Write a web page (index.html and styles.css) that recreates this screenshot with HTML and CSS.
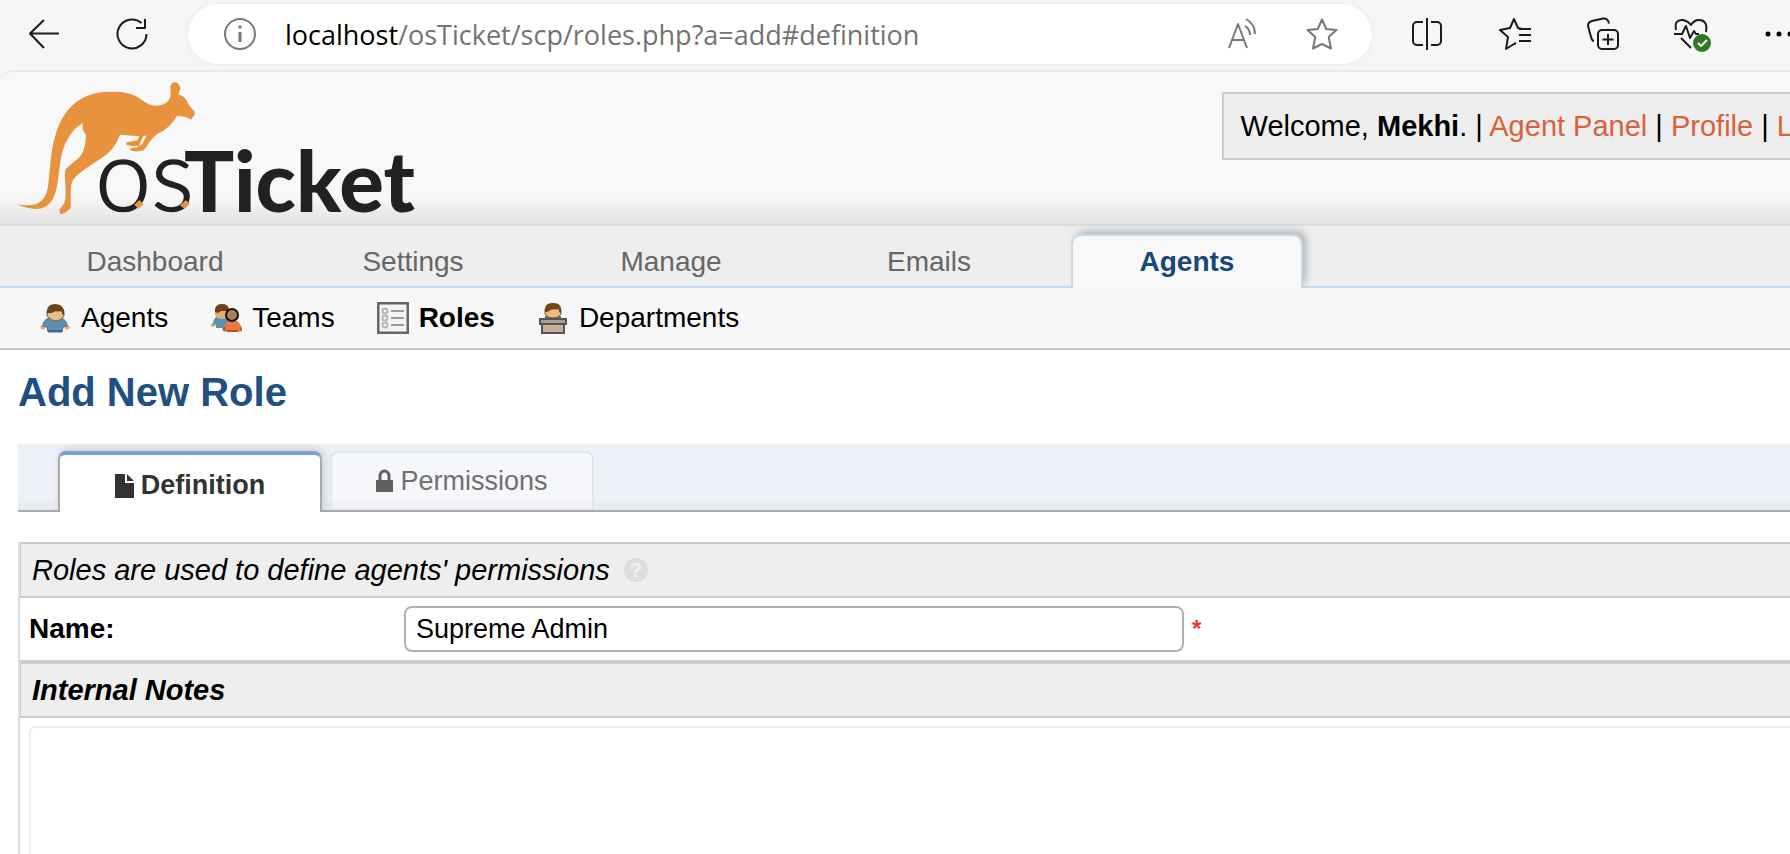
FILE: index.html
```html
<!DOCTYPE html>
<html lang="en">
<head>
<meta charset="utf-8">
<title>osTicket :: Add New Role</title>
<link rel="stylesheet" href="styles.css">
</head>
<body>
<div class="browser-bar">
  <button class="tool" type="button" aria-label="Back">
    <svg width="34" height="34" viewBox="0 0 34 34" class="ico"><path d="M32 16.500H4M17 3 3 16.500 17 31"/></svg>
  </button>
  <button class="tool" type="button" aria-label="Reload">
    <svg width="34" height="34" viewBox="0 0 34 34" class="ico"><path d="M31.500 17a14.500 14.500 0 1 1-5-11"/><path d="M30 2v9h-9"/></svg>
  </button>
  <div class="address">
    <svg width="34" height="34" viewBox="0 0 34 34" class="ico grey"><circle cx="17" cy="17" r="15"/><path d="M17 15v10" stroke-width="3"/><path d="M17 8.500v3" stroke-width="3"/></svg>
    <p class="url"><span class="host">localhost</span>/osTicket/scp/roles.php?a=add#definition</p>
    <button class="address-tool" type="button" aria-label="Read aloud">
      <svg width="34" height="34" viewBox="0 0 34 34" class="ico grey"><path d="M3 31 12 7l9 24M6 23h12M19 9q5 3 5 9M20 2q9 5 9 15"/></svg>
    </button>
    <button class="address-tool" type="button" aria-label="Add to favorites">
      <svg width="34" height="34" viewBox="0 0 34 34" class="ico grey"><path d="M17 2.500l4.200 9.500 10.300 1-7.800 7 2.300 11.500L17 27l-9 4.500L10.300 20 2.500 13l10.300-1z"/></svg>
    </button>
  </div>
  <div class="toolset">
    <button class="tool" type="button" aria-label="Split screen">
      <svg width="34" height="34" viewBox="0 0 34 34" class="ico"><path d="M17 1v32M13 5H7a4 4 0 0 0-4 4v15a4 4 0 0 0 4 4h6M21 5h6a4 4 0 0 1 4 4v15a4 4 0 0 1-4 4h-6"/></svg>
    </button>
    <button class="tool" type="button" aria-label="Favorites">
      <svg width="34" height="34" viewBox="0 0 34 34" class="ico"><path d="M24 12l-4-1L16 2l-4 9-10 2 8 7-2 12 8-5 2-1M21 12h12M21 18h12M21 24h12"/></svg>
    </button>
    <button class="tool" type="button" aria-label="Collections">
      <svg width="34" height="34" viewBox="0 0 34 34" class="ico"><rect x="12" y="13" width="20" height="19" rx="4"/><path d="M22 17v11M16.500 22.500h11M8 24q-2 0-3-4L2 9q0-4 4-5l11-2.500q5-.5 6 5"/></svg>
    </button>
    <button class="tool" type="button" aria-label="Browser essentials">
      <svg width="40" height="36" viewBox="0 0 40 36" class="ico"><path d="M5 14Q3 3 12 4q5 1 8 5 3-5 8-5 9 0 7 12"/><path d="M3 18h8l4-8 4 12 4-7 2 3h3M10 22l10 10"/><circle cx="31" cy="27" r="9" class="ok"/><path d="M27 27l3 3 6-6" class="tick"/></svg>
    </button>
    <button class="tool" type="button" aria-label="Settings and more">
      <svg width="34" height="34" viewBox="0 0 34 34"><circle cx="6" cy="17" r="2.500"/><circle cx="17" cy="17" r="2.500"/><circle cx="28" cy="17" r="2.500"/></svg>
    </button>
  </div>
</div>

<div class="page">
  <header class="header">
    <a href="#" class="logo" aria-label="osTicket">
      <svg width="400" height="138" viewBox="45 30 1200 414">
        <path class="roo" d="M50 403Q85 409 110 402Q137 390 143 355C151 305 150 250 165 200C185 130 225 75 310 66C355 63 395 65 425 89Q448 108 472 107C492 106 507 98 512 76L511 50Q515 36 525 37Q541 40 541 57L535 73Q558 80 566 104L584 126Q585 137 579 140L573 149L558 141L531 137C518 160 500 178 478 188Q460 196 438 232L431 241Q405 248 390 240Q389 233 400 233L414 232L413 227Q395 231 379 224Q376 215 390 215L412 211L418 199L360 194Q348 225 329 245C300 272 240 300 219 330C208 350 214 375 212 415Q200 428 185 433Q176 431 179 417Q192 407 196 388C200 350 192 330 196 300Q203 290 235 265C252 250 257 222 258 194Q243 178 249 158C210 180 187 230 182 270C175 310 174 365 155 392C135 420 105 425 50 403Z"/>
        <path class="gap" d="M430 199 440 196 427 222 416 229 425 209Z"/>
        <text class="os" x="286" y="424">os</text>
        <text class="ticket" x="552" y="427">Ticket</text>
        <path class="roo" d="M403 404 418 390 431 402 415 417ZM540 406 558 390 569 401 554 417Z"/>
      </svg>
    </a>
    <div class="welcome">Welcome, <strong>Mekhi</strong>. | <a href="#">Agent Panel</a> | <a href="#">Profile</a> | <a href="#">Log Out</a></div>
  </header>

  <nav class="main-nav">
    <a href="#">Dashboard</a>
    <a href="#">Settings</a>
    <a href="#">Manage</a>
    <a href="#">Emails</a>
    <a href="#" class="active">Agents</a>
  </nav>

  <nav class="sub-nav">
    <a href="#">
      <svg width="32" height="32" viewBox="0 0 32 32"><circle cx="4" cy="25" r="2.500" fill="#e0ae7c"/><circle cx="28" cy="25" r="2.500" fill="#e0ae7c"/><path d="M10 16h12q6 2 6 8l-4 1-1 5H9l-1-5-4-1q0-6 6-8z" fill="#5a90b2" stroke="#44739a"/><path d="M9 29h14" stroke="#3f5f95" stroke-width="2"/><path d="M8 9h17v5q-3 5-8 5t-9-5z" fill="#e9bd88" stroke="#8a5a2c"/><path d="M8 12V8q1-6 8-6t9 6v5l-2-1V9h-7l-3 2H9z" fill="#6f421d"/></svg>
      Agents</a>
    <a href="#">
      <svg width="32" height="32" viewBox="0 0 32 32"><circle cx="3" cy="23" r="2" fill="#d9a071"/><path d="M8 14h10v12H6v-3l-3-1q0-6 5-8z" fill="#5a90b2"/><path d="M5 8h14v5q-2 4-7 4t-7-4z" fill="#e0ad72"/><path d="M5 10V7q1-5 7-5t7 5v2h-8l-3 2z" fill="#6f421d"/><circle cx="15" cy="27" r="2.500" fill="#a5683c"/><circle cx="30" cy="27" r="2.500" fill="#a5683c"/><path d="M18 19h9q4 3 4 7l-3 4H17l-2-5q0-4 3-6z" fill="#e8783f"/><path d="M17 29h11" stroke="#b8501f" stroke-width="2"/><circle cx="22" cy="13" r="6" fill="#a98157" stroke="#17130f" stroke-width="2"/></svg>
      Teams</a>
    <a href="#" class="active">
      <svg width="32" height="32" viewBox="0 0 32 32"><rect x="1" y="1" width="30" height="30" rx="1" fill="#f4f4f4" stroke="#666" stroke-width="3"/><g fill="none" stroke="#b4b4b4" stroke-width="2"><circle cx="8" cy="9" r="2.500"/><circle cx="8" cy="16" r="2.500"/><circle cx="8" cy="23" r="2.500"/></g><path d="M14 9h13M14 16h13M14 23h13" stroke="#999" stroke-width="2"/></svg>
      Roles</a>
    <a href="#">
      <svg width="32" height="32" viewBox="0 0 32 32"><path d="M8 14h16v4H8z" fill="#39739e"/><path d="M8 7h16v5q-2 4-8 4t-8-4z" fill="#edba82" stroke="#8a5a2c"/><path d="M8 10V6q1-5 8-5t8 5v5l-2-1V7h-7l-3 2-2 1z" fill="#784416"/><path d="M3 17h26v5H3z" fill="#a99e90" stroke="#555" stroke-width="2"/><path d="M5 22h22v9H5z" fill="#c5b296" stroke="#555" stroke-width="2"/></svg>
      Departments</a>
  </nav>

  <main class="content">
    <h1>Add New Role</h1>
    <div class="tabs" role="tablist">
      <button type="button" role="tab" class="tab active" aria-selected="true">
        <svg width="20" height="24" viewBox="0 0 20 24"><path d="M0 0h10v9h9v15H0zM12 0l7 7h-7z" fill="#333"/></svg>
        Definition</button>
      <button type="button" role="tab" class="tab" aria-selected="false">
        <svg width="18" height="24" viewBox="0 0 18 24"><path d="M0 11h17v12H0z" fill="#606060"/><path d="M4 12V7a4.500 5 0 0 1 9 0v5" fill="none" stroke="#606060" stroke-width="3"/></svg>
        Permissions</button>
    </div>
    <form class="form">
      <div class="section"><em>Roles are used to define agents' permissions</em>
        <button type="button" class="help" aria-label="Help">?</button></div>
      <div class="row">
        <label for="name">Name:</label>
        <input id="name" type="text" value="Supreme Admin">
        <span class="required">*</span>
      </div>
      <label class="section strong" for="notes">Internal Notes</label>
      <div class="notes"><textarea id="notes"></textarea></div>
    </form>
  </main>
</div>
</body>
</html>
```
FILE: styles.css
```css
* { box-sizing: border-box; }

body {
  margin: 0;
  height: 100vh;
  display: flex;
  flex-direction: column;
  overflow: hidden;
  background: #f6f6f6;
  color: #000;
  font: 28px "Liberation Sans", Arial, sans-serif;
}

a { color: inherit; text-decoration: none; }

button {
  padding: 0;
  border: 0;
  background: none;
  font: inherit;
}

/* Browser toolbar */
.browser-bar {
  display: flex;
  align-items: center;
  padding: 4px 0 6px;
}

.tool {
  display: flex;
  flex: none;
  align-items: center;
  justify-content: center;
  width: 88px;
  height: 60px;
}

.ico { fill: none; stroke: #1b1b1b; stroke-width: 2; stroke-linejoin: round; }
.ico.grey { stroke: #777; }
.ico .ok { fill: #2c7a22; stroke: none; }
.ico .tick { stroke: #fff; }

.address {
  display: flex;
  flex: 1;
  align-items: center;
  min-width: 0;
  height: 60px;
  margin-left: 12px;
  padding: 0 33px 0 35px;
  border-radius: 30px;
  background: #fff;
  box-shadow: 0 0 4px rgba(0, 0, 0, 0.08);
}

.url {
  flex: 1;
  margin: 0 0 0 28px;
  color: #737373;
  font: 27px "Open Sans", "Noto Sans", sans-serif;
  white-space: nowrap;
}

.host { color: #000; }
.address-tool { display: flex; margin-left: 45px; }

.toolset { display: flex; margin: 0 -33px 0 11px; }

/* Page frame */
.page {
  display: flex;
  flex: 1;
  flex-direction: column;
  border-top: 2px solid #e8e8e8;
  border-radius: 14px 0 0 0;
  background: #fff;
  overflow: hidden;
}

.header {
  display: flex;
  align-items: flex-start;
  justify-content: space-between;
  height: 154px;
  padding: 8px 0 0 15px;
  border-bottom: 2px solid #dcdcdc;
  background: linear-gradient(#f8f8f8 82%, #e2e2e2);
}

.logo { display: flex; }
.logo svg { overflow: visible; }
.roo { fill: #e8923e; }
.gap { fill: #f8f8f8; }
.os {
  fill: #202122;
  stroke: #202122;
  stroke-width: 5px;
  font: 300 300px Lato, sans-serif;
}
.ticket { fill: #202122; font: 900 250px Lato, sans-serif; }

.welcome {
  flex: none;
  margin: 12px -109px 0 0;
  padding: 0 17px;
  border: 2px solid #ccc;
  background: #eee;
  font-size: 29px;
  line-height: 64px;
  white-space: nowrap;
}

.welcome a { color: #d9623a; }

.main-nav {
  display: flex;
  align-items: flex-end;
  gap: 26px;
  height: 62px;
  padding-left: 39px;
  border-bottom: 2px solid #c5d9ec;
  background: #eee;
}

.main-nav a {
  width: 232px;
  margin-bottom: -2px;
  border: 2px solid transparent;
  border-bottom: 0;
  color: #666;
  line-height: 52px;
  text-align: center;
}

.main-nav .active {
  border-color: #c5d9ec;
  border-radius: 10px 10px 0 0;
  background: #f8f8f8;
  box-shadow: 4px -4px 8px -2px rgba(0, 0, 0, 0.3);
  clip-path: inset(-12px -12px 0 -12px);
  color: #184778;
  font-weight: bold;
}

.sub-nav {
  display: flex;
  gap: 42px;
  padding-left: 39px;
  border-bottom: 2px solid #c4c4c4;
  background: #f7f7f7;
  line-height: 60px;
}

.sub-nav a { display: flex; align-items: center; gap: 10px; }
.sub-nav .active { font-weight: bold; }

/* Role form */
.content {
  display: flex;
  flex: 1;
  flex-direction: column;
  padding: 18px 0 0 18px;
}

h1 {
  margin: 0 0 28px;
  color: #205081;
  font-size: 40px;
  line-height: 48px;
}

.tabs {
  display: flex;
  align-items: flex-start;
  gap: 8px;
  height: 68px;
  padding: 7px 0 0 40px;
  border-bottom: 2px solid #aaa;
  background: linear-gradient(#edf1f7 80%, #e6e9ee);
}

.tab {
  display: flex;
  align-items: center;
  justify-content: center;
  gap: 6px;
  width: 264px;
  height: 58px;
  border: 2px solid #e2e5ea;
  border-bottom: 0;
  border-radius: 8px 8px 0 0;
  background: linear-gradient(#f5f7fb 80%, #eceef2);
  color: #707070;
  font-size: 27px;
}

.tab.active {
  height: 61px;
  padding-top: 4px;
  border-color: #aaa;
  border-top: 4px solid #7f9fd3;
  background: #fff;
  box-shadow: 2px -2px 8px rgba(0, 0, 0, 0.15);
  clip-path: inset(-8px -8px 0 -8px);
  color: #333;
  font-weight: bold;
}

.form {
  display: flex;
  flex: 1;
  flex-direction: column;
  margin-top: 30px;
  border-left: 2px solid #ddd;
}

.section {
  display: flex;
  align-items: center;
  gap: 14px;
  padding-left: 11px;
  border: 2px solid #ccc;
  border-width: 2px 0 2px 1px;
  background: #eee;
  font-size: 29px;
  line-height: 52px;
}

.section.strong { border-top-width: 4px; font-weight: bold; font-style: italic; }

.help {
  width: 24px;
  height: 24px;
  border-radius: 50%;
  background: #ddd;
  color: #f2f2f2;
  font-size: 20px;
  font-weight: bold;
  line-height: 24px;
}

.row {
  display: grid;
  grid-template-columns: 375px 780px 1fr;
  align-items: center;
  padding: 8px 0 8px 9px;
}

.row label { font-weight: bold; }

.row input {
  height: 46px;
  padding: 0 10px;
  border: 2px solid #b0b0b0;
  border-radius: 8px;
  background: #fff;
  color: #000;
  font: inherit;
  font-size: 27px;
}

.required { padding-left: 8px; color: #f03030; font-size: 24px; font-weight: bold; line-height: 24px; }

.notes { display: flex; flex: 1; padding: 8px 0 0 9px; }

.notes textarea {
  flex: 1;
  border: 2px solid #eee;
  border-width: 2px 0 0 2px;
  border-radius: 6px 0 0 0;
  outline: 0;
  resize: none;
  font: inherit;
}
```
